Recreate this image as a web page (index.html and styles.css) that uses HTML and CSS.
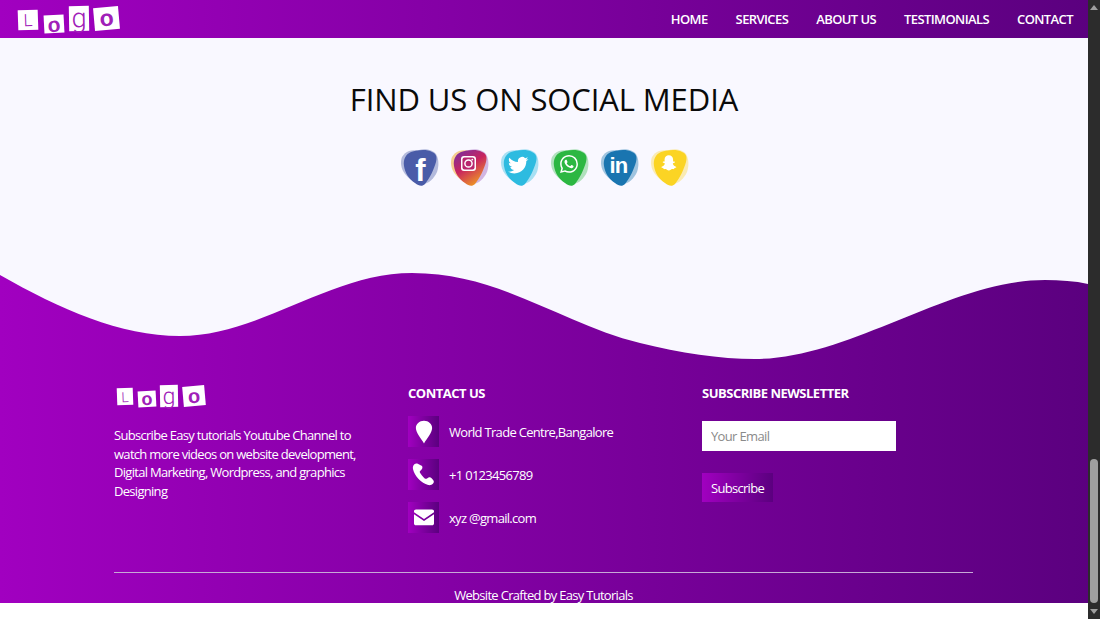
FILE: index.html
```html
<!DOCTYPE html>
<html lang="en">

<head>
    <meta charset="UTF-8">
    <meta name="viewport" content="width=device-width, initial-scale=1.0">
    <title>Find Us On Social Media</title>
    <link rel="stylesheet" href="styles.css">
</head>

<body>
    <svg class="defs" width="0" height="0" aria-hidden="true">
        <defs>
            <path id="blob" d="M12 3C18 1 28 0 33 3C38 5 38 9 37 13C35 20 31 29 26 35C23 38 20 37 16 34C10 30 6 24 5 17C4 10 7 5 12 3Z" />
            <path id="blob-left" d="M10 2C16 0 24 2 26 8C28 14 24 24 18 30C14 33 10 30 6 25C2 20 1 13 3 8C5 5 7 3 10 2Z" />
            <path id="blob-right" d="M20 1C26 -1 34 1 37 5C40 10 40 17 38 23C35 30 28 36 24 34C18 31 15 23 15 15C15 9 16 3 20 1Z" />
            <linearGradient id="insta" x1="0.15" y1="0" x2="0.75" y2="1">
                <stop offset="0" stop-color="#7c2f9e" />
                <stop offset="0.45" stop-color="#c8235f" />
                <stop offset="1" stop-color="#f2a31f" />
            </linearGradient>
        </defs>
    </svg>

    <div class="page">
        <div class="nav">
            <div class="logo">
                <span class="logo-l">L</span>
                <span class="logo-o">o</span>
                <span class="logo-g">g</span>
                <span class="logo-o2">o</span>
            </div>
            <div class="nav-links">
                <a href="#">HOME</a>
                <a href="#">SERVICES</a>
                <a href="#">ABOUT US</a>
                <a href="#">TESTIMONIALS</a>
                <a href="#">CONTACT</a>
            </div>
        </div>

        <div class="social">
            <h1>FIND US ON SOCIAL MEDIA</h1>
            <div class="social-icons">
                <svg viewBox="0 0 40 40" class="facebook">
                    <use href="#blob-left" opacity="0.4" />
                    <use href="#blob-right" opacity="0.4" />
                    <use href="#blob" />
                    <text x="21" y="32" class="glyph-f">f</text>
                </svg>
                <svg viewBox="0 0 40 40" class="instagram">
                    <use href="#blob-left" fill="#f2a31f" opacity="0.5" />
                    <use href="#blob-right" fill="#8a3aa8" opacity="0.35" />
                    <use href="#blob" fill="url(#insta)" />
                    <rect x="12" y="7" width="15" height="15" rx="3" fill="#fff" />
                    <rect x="13.5" y="8.5" width="12" height="12" rx="2" fill="#b9276f" />
                    <circle cx="19.5" cy="14.5" r="3.6" fill="none" stroke="#fff" stroke-width="1.5" />
                    <circle cx="23.3" cy="10.6" r="0.9" fill="#fff" />
                </svg>
                <svg viewBox="0 0 40 40" class="twitter">
                    <use href="#blob-left" opacity="0.4" />
                    <use href="#blob-right" opacity="0.4" />
                    <use href="#blob" />
                    <path transform="translate(9 6) scale(0.85)" fill="#fff" d="M23.953 4.57a10 10 0 01-2.825.775 4.958 4.958 0 002.163-2.723c-.951.555-2.005.959-3.127 1.184a4.92 4.92 0 00-8.384 4.482C7.69 8.095 4.067 6.13 1.64 3.162a4.822 4.822 0 00-.666 2.475c0 1.71.87 3.213 2.188 4.096a4.904 4.904 0 01-2.228-.616v.06a4.923 4.923 0 003.946 4.827 4.996 4.996 0 01-2.212.085 4.936 4.936 0 004.604 3.417 9.867 9.867 0 01-6.102 2.105c-.39 0-.779-.023-1.17-.067a13.995 13.995 0 007.557 2.209c9.053 0 13.998-7.496 13.998-13.985 0-.21 0-.42-.015-.63A9.935 9.935 0 0024 4.59z" />
                </svg>
                <svg viewBox="0 0 40 40" class="whatsapp">
                    <use href="#blob-left" opacity="0.35" />
                    <use href="#blob-right" opacity="0.35" />
                    <use href="#blob" />
                    <path transform="translate(11 6) scale(0.75)" fill="#fff" d="M17.472 14.382c-.297-.149-1.758-.867-2.03-.967-.273-.099-.471-.148-.67.15-.197.297-.767.966-.94 1.164-.173.199-.347.223-.644.075-.297-.15-1.255-.463-2.39-1.475-.883-.788-1.48-1.761-1.653-2.059-.173-.297-.018-.458.13-.606.134-.133.298-.347.446-.52.149-.174.198-.298.298-.497.099-.198.05-.371-.025-.52-.075-.149-.669-1.612-.916-2.207-.242-.579-.487-.5-.669-.51-.173-.008-.371-.01-.57-.01-.198 0-.52.074-.792.372-.272.297-1.04 1.016-1.04 2.479 0 1.462 1.065 2.875 1.213 3.074.149.198 2.096 3.2 5.077 4.487.709.306 1.262.489 1.694.625.712.227 1.36.195 1.871.118.571-.085 1.758-.719 2.006-1.413.248-.694.248-1.289.173-1.413-.074-.124-.272-.198-.57-.347m-5.421 7.403h-.004a9.87 9.87 0 01-5.031-1.378l-.361-.214-3.741.982.998-3.648-.235-.374a9.86 9.86 0 01-1.51-5.26c.001-5.45 4.436-9.884 9.888-9.884 2.64 0 5.122 1.03 6.988 2.898a9.825 9.825 0 012.893 6.994c-.003 5.45-4.437 9.884-9.885 9.884m8.413-18.297A11.815 11.815 0 0012.05 0C5.495 0 .16 5.335.157 11.892c0 2.096.547 4.142 1.588 5.945L.057 24l6.305-1.654a11.882 11.882 0 005.683 1.448h.005c6.554 0 11.89-5.335 11.893-11.893a11.821 11.821 0 00-3.48-8.413z" />
                </svg>
                <svg viewBox="0 0 40 40" class="linkedin">
                    <use href="#blob-left" opacity="0.4" />
                    <use href="#blob-right" opacity="0.4" />
                    <use href="#blob" />
                    <text x="19.5" y="24" class="glyph-in">in</text>
                </svg>
                <svg viewBox="0 0 40 40" class="snapchat">
                    <use href="#blob-left" opacity="0.35" />
                    <use href="#blob-right" opacity="0.35" />
                    <use href="#blob" />
                    <path transform="translate(10 4.500) scale(0.82)" fill="#fff" d="M12 2c3 0 5.200 2.200 5.200 5.200 0 1 0 1.900-.1 2.600.5.2 1 0 1.500 0 .5 0 .9.3.9.7 0 .8-1.600 1-2.300 1.400-.3.2-.3.5-.2.8.7 1.600 2 2.900 3.700 3.400.4.1.6.4.4.8-.3.6-1.500.9-2.400 1-.2.3-.2.9-.5 1.100-.5.2-1.400-.2-2.300 0-1.200.2-1.900 1.800-3.900 1.800s-2.700-1.600-3.900-1.800c-.9-.2-1.800.2-2.300 0-.3-.2-.3-.8-.5-1.100-.9-.1-2.100-.4-2.400-1-.2-.4 0-.7.4-.8 1.700-.5 3-1.800 3.700-3.400.1-.3.1-.6-.2-.8-.7-.4-2.300-.6-2.300-1.400 0-.4.4-.7.9-.7.5 0 1 .2 1.500 0-.1-.7-.1-1.600-.1-2.600C6.800 4.200 9 2 12 2z" />
                </svg>
            </div>
        </div>

        <div class="footer">
            <svg class="wave" viewBox="0 0 1088 88" preserveAspectRatio="none">
                <path d="M0 0V2C60 36 120 63 180 63C260 63 330 0 412 0C500 0 560 50 640 70C680 80 720 86 755 86C850 86 950 7 1045 7C1060 7 1075 8 1088 11V0Z" />
            </svg>
            <div class="footer-cols">
                <div class="footer-about">
                    <div class="logo logo-small">
                        <span class="logo-l">L</span>
                        <span class="logo-o">o</span>
                        <span class="logo-g">g</span>
                        <span class="logo-o2">o</span>
                    </div>
                    <p>Subscribe Easy tutorials Youtube Channel to watch more videos on website development, Digital Marketing, Wordpress, and graphics Designing</p>
                </div>
                <div class="footer-contact">
                    <h3>CONTACT US</h3>
                    <div class="contact-row">
                        <span class="contact-icon">
                            <svg viewBox="0 0 24 24" width="26" height="26"><path fill="#fff" d="M12 1.500c-4.300 0-7.500 3-7.500 6.800 0 4.400 5 10 7.500 14.200 2.500-4.200 7.500-9.800 7.500-14.200 0-3.800-3.200-6.800-7.500-6.800z" /></svg>
                        </span>
                        <span>World Trade Centre,Bangalore</span>
                    </div>
                    <div class="contact-row">
                        <span class="contact-icon">
                            <svg viewBox="0 0 24 24" width="27" height="27"><path fill="#fff" d="M6.900 2.500c-.9-.6-2.100-.4-3 .4C2.700 4 2.300 5.600 2.700 7.400c1.300 6 7.400 12.400 13.500 14 1.700.4 3.200-.1 4.300-1.400.8-.9.900-2.100.2-3l-1.500-1.700c-.8-.9-2-1.100-3-.5l-1.500.9c-.5.3-1.100.2-1.600-.2-1.800-1.500-3.300-3.300-4.300-5.200-.3-.5-.2-1.100.2-1.500l1.300-1.300c.8-.8 1-2 .4-3z" /></svg>
                        </span>
                        <span>+1 0123456789</span>
                    </div>
                    <div class="contact-row">
                        <span class="contact-icon">
                            <svg viewBox="0 0 24 24" width="24" height="24"><path fill="#fff" d="M4 3.500h16c1.200 0 2 .8 2 1.800v.9l-10 6.700L2 6.200v-.9c0-1 .8-1.800 2-1.800z" /><path fill="#fff" d="M2 8.300l10 6.700 10-6.700v9.200c0 1-.8 1.800-2 1.800H4c-1.200 0-2-.8-2-1.800z" /></svg>
                        </span>
                        <span>xyz @gmail.com</span>
                    </div>
                </div>
                <div class="footer-news">
                    <h3>SUBSCRIBE NEWSLETTER</h3>
                    <input type="text" placeholder="Your Email">
                    <button>Subscribe</button>
                </div>
            </div>
            <hr>
            <div class="credit">Website Crafted by Easy Tutorials</div>
        </div>
    </div>

    <div class="scrollbar">
        <span class="arrow-up"></span>
        <span class="thumb"></span>
        <span class="arrow-down"></span>
    </div>
</body>

</html>
```

FILE: styles.css
```css
* {
    margin: 0;
    padding: 0;
    box-sizing: border-box;
}

html,
body {
    height: 619px;
    overflow: hidden;
}

body {
    display: flex;
    font-family: "Open Sans", sans-serif;
    font-size: 13px;
    font-weight: 500;
    letter-spacing: -0.7px;
    background: #fff;
    color: #fff;
}

.defs {
    position: absolute;
}

.page {
    flex: 1;
    min-width: 0;
}

.nav {
    height: 38px;
    display: flex;
    justify-content: space-between;
    align-items: center;
    padding: 0 15px 0 18px;
    background: linear-gradient(to right, #a100c0, #5b007f);
}

.nav-links {
    display: flex;
    gap: 28px;
}

.nav-links a {
    color: #fff;
    text-decoration: none;
    font-size: 13px;
    font-weight: 600;
    letter-spacing: -0.6px;
}

/* logo letters are little tilted paper squares */
.logo {
    display: flex;
    align-items: flex-start;
    height: 26px;
    color: #a020b8;
    font-family: "Liberation Sans", sans-serif;
    line-height: 1;
    letter-spacing: 0;
}

.logo span {
    display: flex;
    align-items: center;
    justify-content: center;
    background: #fff;
}

.logo-l {
    width: 20px;
    height: 20px;
    margin-top: 4px;
    transform: rotate(-2deg);
    font-family: Roboto, sans-serif;
    font-size: 17px;
    font-weight: 300;
}

.logo-o {
    width: 20px;
    height: 18px;
    margin: 9px 0 0 6px;
    transform: rotate(-3deg);
    font-size: 21px;
    font-weight: bold;
}

.logo-g {
    width: 20px;
    height: 25px;
    margin-left: 5px;
    transform: rotate(-1deg);
    font-family: Roboto, sans-serif;
    font-size: 27px;
    font-weight: 300;
}

.logo-o2 {
    width: 25px;
    height: 23px;
    margin: 1px 0 0 5px;
    transform: rotate(-5deg);
    font-size: 23px;
    font-weight: bold;
}

.logo-small {
    height: 22px;
    margin: 1px 0 0 3px;
}

.logo-small .logo-l {
    width: 16px;
    height: 17px;
    margin-top: 3px;
    font-size: 14px;
}

.logo-small .logo-o {
    width: 18px;
    height: 16px;
    margin: 6px 0 0 5px;
    font-size: 18px;
}

.logo-small .logo-g {
    width: 18px;
    height: 22px;
    margin-left: 4px;
    font-size: 23px;
}

.logo-small .logo-o2 {
    width: 22px;
    height: 20px;
    margin: 1px 0 0 5px;
    font-size: 20px;
}

.social {
    height: 235px;
    padding-top: 42px;
    background: #f9f8ff;
    text-align: center;
}

.social h1 {
    color: #0a0a0a;
    font-size: 31px;
    font-weight: 500;
    line-height: 38px;
    letter-spacing: -0.1px;
}

.social-icons {
    display: flex;
    justify-content: center;
    gap: 10px;
    margin-top: 31px;
    padding-right: 1px;
}

.social-icons svg {
    width: 40px;
    height: 40px;
    overflow: visible;
}

.facebook { fill: #4a5ca8; }
.twitter { fill: #2dbbe0; }
.whatsapp { fill: #2cb742; }
.linkedin { fill: #1a75b0; }
.snapchat { fill: #fbd424; }

.glyph-f {
    fill: #fff;
    font-family: "Liberation Sans", sans-serif;
    font-size: 31px;
    font-weight: bold;
    text-anchor: middle;
}

.glyph-in {
    fill: #fff;
    font-family: "Liberation Sans", sans-serif;
    font-size: 22px;
    font-weight: bold;
    text-anchor: middle;
}

.footer {
    position: relative;
    height: 330px;
    padding: 111px 115px 0 114px;
    background: linear-gradient(to right, #a100c0, #5b007f);
}

.wave {
    position: absolute;
    top: 0;
    left: 0;
    width: 100%;
    height: 88px;
    fill: #f9f8ff;
}

.footer-cols {
    display: grid;
    grid-template-columns: 294px 294px 1fr;
    height: 188px;
}

.footer-about p {
    width: 250px;
    margin-top: 19px;
    line-height: 18.700px;
}

.footer h3 {
    height: 22px;
    margin-bottom: 10px;
    font-size: 13px;
    font-weight: 700;
    line-height: 18px;
    letter-spacing: -0.5px;
}

.contact-row {
    display: flex;
    align-items: center;
    gap: 10px;
    height: 31px;
    margin-bottom: 12px;
}

.contact-icon {
    display: flex;
    align-items: center;
    justify-content: center;
    flex: none;
    width: 31px;
    height: 31px;
    background: linear-gradient(to right, #a100c0, #5b007f);
}

.footer-news input {
    display: block;
    width: 194px;
    height: 30px;
    margin-top: 15px;
    padding: 0 9px;
    border: none;
    background: #fff;
    font-family: inherit;
    font-size: 13px;
    letter-spacing: -0.65px;
}

.footer-news input::placeholder {
    color: #8a8a8a;
}

.footer-news button {
    display: block;
    width: 71px;
    height: 29px;
    margin-top: 22px;
    border: none;
    background: linear-gradient(to right, #a100c0, #5b007f);
    color: #fff;
    font-family: inherit;
    font-size: 13px;
    font-weight: 500;
    letter-spacing: -0.7px;
}

.footer hr {
    border: none;
    border-top: 1px solid #c7a9d6;
}

.credit {
    margin-top: 14px;
    line-height: 16px;
    text-align: center;
}

.scrollbar {
    position: relative;
    width: 12px;
    height: 619px;
    background: #2c2c2c;
}

.thumb {
    position: absolute;
    top: 459px;
    left: 2px;
    width: 8px;
    height: 144px;
    border-radius: 4px;
    background: #9f9f9f;
}

.arrow-up,
.arrow-down {
    position: absolute;
    left: 2px;
    border-left: 4px solid transparent;
    border-right: 4px solid transparent;
}

.arrow-up {
    top: 5px;
    border-bottom: 5px solid #9f9f9f;
}

.arrow-down {
    bottom: 5px;
    border-top: 5px solid #9f9f9f;
}
```
